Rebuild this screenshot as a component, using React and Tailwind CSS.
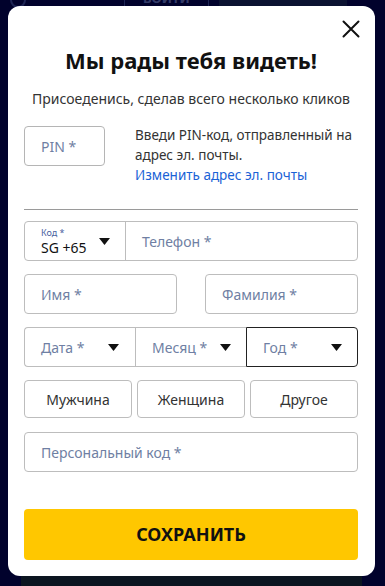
import React from 'react';

const Caret = () => (
  <svg width="11" height="7" viewBox="0 0 11 7" className="shrink-0">
    <path d="M0 0h11L5.5 7z" fill="#111" />
  </svg>
);

const App = () => {
  return (
    <div className="relative h-[586px] w-[385px] overflow-hidden bg-[#01022c] font-['Noto_Sans',sans-serif]">
      {/* page header behind overlay */}
      <div className="flex h-[40px] items-start opacity-40">
        <div className="ml-[10px] mt-[-8px] h-[16px] w-[16px] rounded-full border-2 border-[#4a5a90]" />
        <div className="ml-[98px] h-[10px] w-px bg-[#4a5a90]" />
        <div className="ml-[18px] mt-[-10px] text-[13px] font-bold leading-[16px] text-[#8090c0]">ВОЙТИ</div>
        <div className="ml-[18px] h-[10px] w-px bg-[#4a5a90]" />
        <div className="ml-[10px] h-[8px] w-[128px] bg-[#1c2a3a]" />
      </div>

      {/* bottom strip below modal */}
      <div className="absolute bottom-0 left-[21px] h-[12px] w-[341px] bg-[#0b1520]" />

      {/* modal */}
      <div className="absolute left-[8px] top-[6px] h-[570px] w-[367px] rounded-[12px] bg-white px-[16px] pr-[17px]">
        <button className="absolute right-[15px] top-[14px] text-[#111]">
          <svg width="18" height="18" viewBox="0 0 18 18">
            <path d="M1.5 1.5l15 15M16.5 1.5l-15 15" stroke="#111" strokeWidth="2" strokeLinecap="round" />
          </svg>
        </button>

        <h1 className="mt-[39px] text-center text-[22px] font-bold leading-[30px] text-[#111]">
          Мы рады тебя видеть!
        </h1>
        <p className="mt-[14px] text-center text-[14px] leading-[20px] text-[#333]">
          Присоеденись, сделав всего несколько кликов
        </p>

        {/* PIN */}
        <div className="mt-[17px] flex gap-[30px]">
          <div className="flex h-[40px] w-[81px] shrink-0 items-center rounded-[4px] border border-[#b5b5b5] pl-[16px] text-[14px] text-[#6f7fa3]">
            PIN *
          </div>
          <div className="mt-[-1px] text-[13.5px] leading-[20px] text-[#333]">
            <p>Введи PIN-код, отправленный на адрес эл. почты.</p>
            <a className="text-[#1a62d6]">Изменить адрес эл. почты</a>
          </div>
        </div>

        <div className="mt-[24px] h-px bg-[#9a9a9a]" />

        {/* phone */}
        <div className="mt-[11px] flex h-[40px] rounded-[4px] border border-[#bdbdbd]">
          <div className="flex w-[101px] shrink-0 items-center justify-between border-r border-[#bdbdbd] pl-[16px] pr-[15px]">
            <div className="flex flex-col pt-[1px]">
              <span className="text-[9px] leading-[11px] text-[#4a62a0]">Код *</span>
              <span className="text-[14px] leading-[19px] text-[#111]">SG +65</span>
            </div>
            <Caret />
          </div>
          <div className="flex items-center pl-[16px] text-[14px] text-[#6f7fa3]">Телефон *</div>
        </div>

        {/* names */}
        <div className="mt-[13px] flex justify-between">
          <div className="flex h-[40px] w-[153px] items-center rounded-[4px] border border-[#bdbdbd] pl-[16px] text-[14px] text-[#6f7fa3]">
            Имя *
          </div>
          <div className="flex h-[40px] w-[153px] items-center rounded-[4px] border border-[#bdbdbd] pl-[16px] text-[14px] text-[#6f7fa3]">
            Фамилия *
          </div>
        </div>

        {/* birth date */}
        <div className="mt-[13px] flex h-[40px]">
          <div className="flex w-[111px] items-center justify-between rounded-l-[4px] border border-r-0 border-[#bdbdbd] pl-[16px] pr-[16px] text-[14px] text-[#6f7fa3]">
            Дата * <Caret />
          </div>
          <div className="flex w-[111px] items-center justify-between border border-r-0 border-[#bdbdbd] pl-[16px] pr-[15px] text-[14px] text-[#6f7fa3]">
            Месяц * <Caret />
          </div>
          <div className="flex flex-1 items-center justify-between rounded-r-[4px] border border-[#222] pl-[16px] pr-[15px] text-[14px] text-[#6f7fa3]">
            Год * <Caret />
          </div>
        </div>

        {/* gender */}
        <div className="mt-[13px] grid grid-cols-3 gap-[5px]">
          {['Мужчина', 'Женщина', 'Другое'].map((g) => (
            <button
              key={g}
              className="flex h-[38px] items-center justify-center rounded-[4px] border border-[#bdbdbd] text-[14px] text-[#333]"
            >
              {g}
            </button>
          ))}
        </div>

        {/* personal code */}
        <div className="mt-[14px] flex h-[40px] items-center rounded-[4px] border border-[#bdbdbd] pl-[16px] text-[14px] text-[#6f7fa3]">
          Персональный код *
        </div>

        <button className="mt-[37px] flex h-[51px] w-full items-center justify-center rounded-[4px] bg-[#ffc700] text-[18px] font-bold text-[#111]">
          СОХРАНИТЬ
        </button>
      </div>
    </div>
  );
};

export default App;
